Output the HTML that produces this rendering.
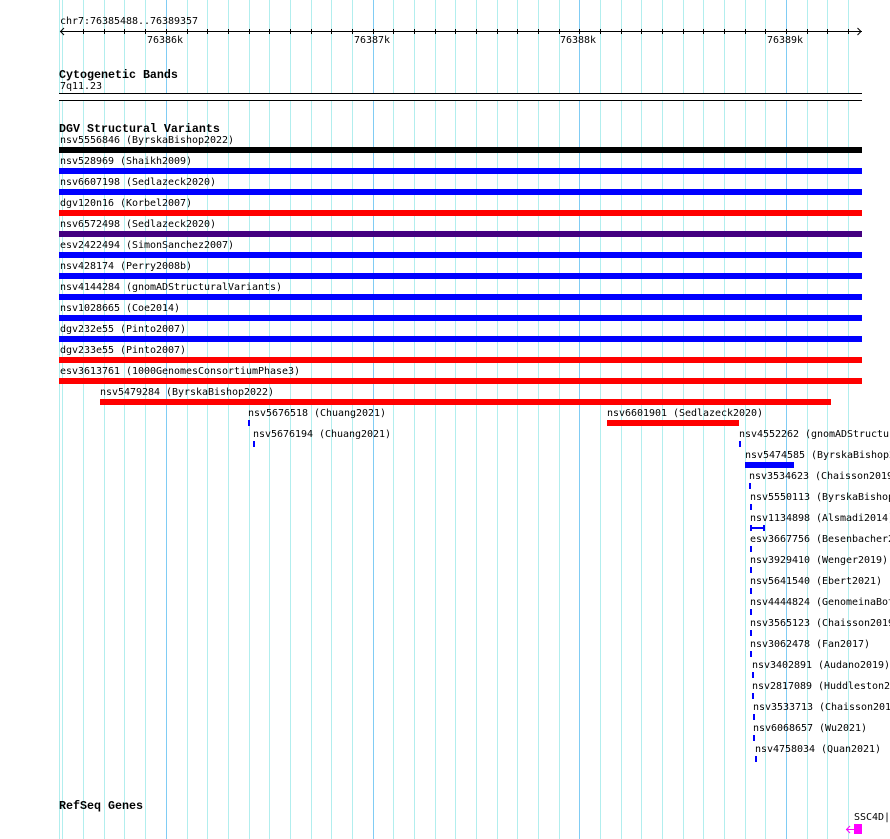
<!DOCTYPE html>
<html>
<head>
<meta charset="utf-8">
<style>
html,body{margin:0;padding:0;background:#fff;width:890px;height:839px;overflow:hidden}
#p{position:relative;width:890px;height:839px;overflow:hidden}
svg{position:absolute;left:0;top:0}
.t,.h{position:absolute;white-space:pre;color:#000;font-family:"DejaVu Sans Mono","Liberation Mono",monospace;font-size:10px;line-height:12px;letter-spacing:-0.02px}
.t{margin-top:1px}
.h{font-family:"Liberation Mono",monospace;font-weight:bold;font-size:11.67px;letter-spacing:0}
.b{position:absolute;height:6px}
.k{background:#000}.u{background:#0000ff}.r{background:#ff0000}.v{background:#440080}
.f{left:59px;width:803px}
.n{width:2px}
</style>
</head>
<body>
<div id="p">
<svg width="890" height="839" shape-rendering="crispEdges">
<path fill="none" stroke="#b2eeee" stroke-width="1" d="M59.5 0V93M59.5 101V839M62.5 0V93M62.5 101V839M83.5 0V93M83.5 101V839M104.5 0V93M104.5 101V839M124.5 0V93M124.5 101V839M145.5 0V93M145.5 101V839M187.5 0V93M187.5 101V839M207.5 0V93M207.5 101V839M228.5 0V93M228.5 101V839M249.5 0V93M249.5 101V839M269.5 0V93M269.5 101V839M290.5 0V93M290.5 101V839M311.5 0V93M311.5 101V839M331.5 0V93M331.5 101V839M352.5 0V93M352.5 101V839M393.5 0V93M393.5 101V839M414.5 0V93M414.5 101V839M435.5 0V93M435.5 101V839M455.5 0V93M455.5 101V839M476.5 0V93M476.5 101V839M497.5 0V93M497.5 101V839M517.5 0V93M517.5 101V839M538.5 0V93M538.5 101V839M559.5 0V93M559.5 101V839M600.5 0V93M600.5 101V839M621.5 0V93M621.5 101V839M641.5 0V93M641.5 101V839M662.5 0V93M662.5 101V839M683.5 0V93M683.5 101V839M703.5 0V93M703.5 101V839M724.5 0V93M724.5 101V839M745.5 0V93M745.5 101V839M765.5 0V93M765.5 101V839M807.5 0V93M807.5 101V839M827.5 0V93M827.5 101V839M848.5 0V93M848.5 101V839"/>
<path fill="none" stroke="#80ccf4" stroke-width="1" d="M166.5 0V93M166.5 101V839M373.5 0V93M373.5 101V839M579.5 0V93M579.5 101V839M786.5 0V93M786.5 101V839"/>
<path fill="none" stroke="#000" stroke-width="1" d="M60 31.5H862M83.5 29V34M104.5 29V34M124.5 29V34M145.5 29V34M166.5 29V34M187.5 29V34M207.5 29V34M228.5 29V34M249.5 29V34M269.5 29V34M290.5 29V34M311.5 29V34M331.5 29V34M352.5 29V34M373.5 29V34M393.5 29V34M414.5 29V34M435.5 29V34M455.5 29V34M476.5 29V34M497.5 29V34M517.5 29V34M538.5 29V34M559.5 29V34M579.5 29V34M600.5 29V34M621.5 29V34M641.5 29V34M662.5 29V34M683.5 29V34M703.5 29V34M724.5 29V34M745.5 29V34M765.5 29V34M786.5 29V34M807.5 29V34M827.5 29V34M848.5 29V34M59 93.5H862M59 100.5H862"/>
<path fill="none" stroke="#000" stroke-width="1" shape-rendering="auto" d="M64 28L60.5 31.5L64 35M857.5 28L861 31.5L857.5 35"/>
<path fill="#0000ff" d="M750 525h2v2h11v-2h2v6h-2v-2h-11v2h-2z"/>
<path fill="none" stroke="#ff00ff" stroke-width="1" d="M846 829.5H854"/>
<path fill="none" stroke="#ff00ff" stroke-width="1" shape-rendering="auto" d="M850 826L846.5 829.5L850 833"/>
</svg>

<div class="t" style="left:60px;top:15px">chr7:76385488..76389357</div>
<div class="t" style="left:147px;top:34px">76386k</div>
<div class="t" style="left:354px;top:34px">76387k</div>
<div class="t" style="left:560px;top:34px">76388k</div>
<div class="t" style="left:767px;top:34px">76389k</div>

<div class="h" style="left:59px;top:69px">Cytogenetic Bands</div>
<div class="t" style="left:60px;top:80px">7q11.23</div>

<div class="h" style="left:59px;top:123px">DGV Structural Variants</div>

<div class="t" style="left:60px;top:134px">nsv5556846 (ByrskaBishop2022)</div><div class="b f k" style="top:147px"></div>
<div class="t" style="left:60px;top:155px">nsv528969 (Shaikh2009)</div><div class="b f u" style="top:168px"></div>
<div class="t" style="left:60px;top:176px">nsv6607198 (Sedlazeck2020)</div><div class="b f u" style="top:189px"></div>
<div class="t" style="left:60px;top:197px">dgv120n16 (Korbel2007)</div><div class="b f r" style="top:210px"></div>
<div class="t" style="left:60px;top:218px">nsv6572498 (Sedlazeck2020)</div><div class="b f v" style="top:231px"></div>
<div class="t" style="left:60px;top:239px">esv2422494 (SimonSanchez2007)</div><div class="b f u" style="top:252px"></div>
<div class="t" style="left:60px;top:260px">nsv428174 (Perry2008b)</div><div class="b f u" style="top:273px"></div>
<div class="t" style="left:60px;top:281px">nsv4144284 (gnomADStructuralVariants)</div><div class="b f u" style="top:294px"></div>
<div class="t" style="left:60px;top:302px">nsv1028665 (Coe2014)</div><div class="b f u" style="top:315px"></div>
<div class="t" style="left:60px;top:323px">dgv232e55 (Pinto2007)</div><div class="b f u" style="top:336px"></div>
<div class="t" style="left:60px;top:344px">dgv233e55 (Pinto2007)</div><div class="b f r" style="top:357px"></div>
<div class="t" style="left:60px;top:365px">esv3613761 (1000GenomesConsortiumPhase3)</div><div class="b f r" style="top:378px"></div>

<div class="t" style="left:100px;top:386px">nsv5479284 (ByrskaBishop2022)</div><div class="b r" style="left:100px;width:731px;top:399px"></div>
<div class="t" style="left:248px;top:407px">nsv5676518 (Chuang2021)</div><div class="b n u" style="left:248px;top:420px"></div>
<div class="t" style="left:253px;top:428px">nsv5676194 (Chuang2021)</div><div class="b n u" style="left:253px;top:441px"></div>
<div class="t" style="left:607px;top:407px">nsv6601901 (Sedlazeck2020)</div><div class="b r" style="left:607px;width:132px;top:420px"></div>
<div class="t" style="left:739px;top:428px">nsv4552262 (gnomADStructuralVariants)</div><div class="b n u" style="left:739px;top:441px"></div>
<div class="t" style="left:745px;top:449px">nsv5474585 (ByrskaBishop2022)</div><div class="b u" style="left:745px;width:49px;top:462px"></div>
<div class="t" style="left:749px;top:470px">nsv3534623 (Chaisson2019)</div><div class="b n u" style="left:749px;top:483px"></div>
<div class="t" style="left:750px;top:491px">nsv5550113 (ByrskaBishop2022)</div><div class="b n u" style="left:750px;top:504px"></div>
<div class="t" style="left:750px;top:512px">nsv1134898 (Alsmadi2014)</div>
<div class="t" style="left:750px;top:533px">esv3667756 (Besenbacher2016)</div><div class="b n u" style="left:750px;top:546px"></div>
<div class="t" style="left:750px;top:554px">nsv3929410 (Wenger2019)</div><div class="b n u" style="left:750px;top:567px"></div>
<div class="t" style="left:750px;top:575px">nsv5641540 (Ebert2021)</div><div class="b n u" style="left:750px;top:588px"></div>
<div class="t" style="left:750px;top:596px">nsv4444824 (GenomeinaBottle)</div><div class="b n u" style="left:750px;top:609px"></div>
<div class="t" style="left:750px;top:617px">nsv3565123 (Chaisson2019)</div><div class="b n u" style="left:750px;top:630px"></div>
<div class="t" style="left:750px;top:638px">nsv3062478 (Fan2017)</div><div class="b n u" style="left:750px;top:651px"></div>
<div class="t" style="left:752px;top:659px">nsv3402891 (Audano2019)</div><div class="b n u" style="left:752px;top:672px"></div>
<div class="t" style="left:752px;top:680px">nsv2817089 (Huddleston2017)</div><div class="b n u" style="left:752px;top:693px"></div>
<div class="t" style="left:753px;top:701px">nsv3533713 (Chaisson2019)</div><div class="b n u" style="left:753px;top:714px"></div>
<div class="t" style="left:753px;top:722px">nsv6068657 (Wu2021)</div><div class="b n u" style="left:753px;top:735px"></div>
<div class="t" style="left:755px;top:743px">nsv4758034 (Quan2021)</div><div class="b n u" style="left:755px;top:756px"></div>

<div class="h" style="left:59px;top:800px">RefSeq Genes</div>
<div class="t" style="left:854px;top:811px">SSC4D|</div>
<div class="b" style="left:854px;top:824px;width:8px;height:10px;background:#ff00ff"></div>
</div>
</body>
</html>
